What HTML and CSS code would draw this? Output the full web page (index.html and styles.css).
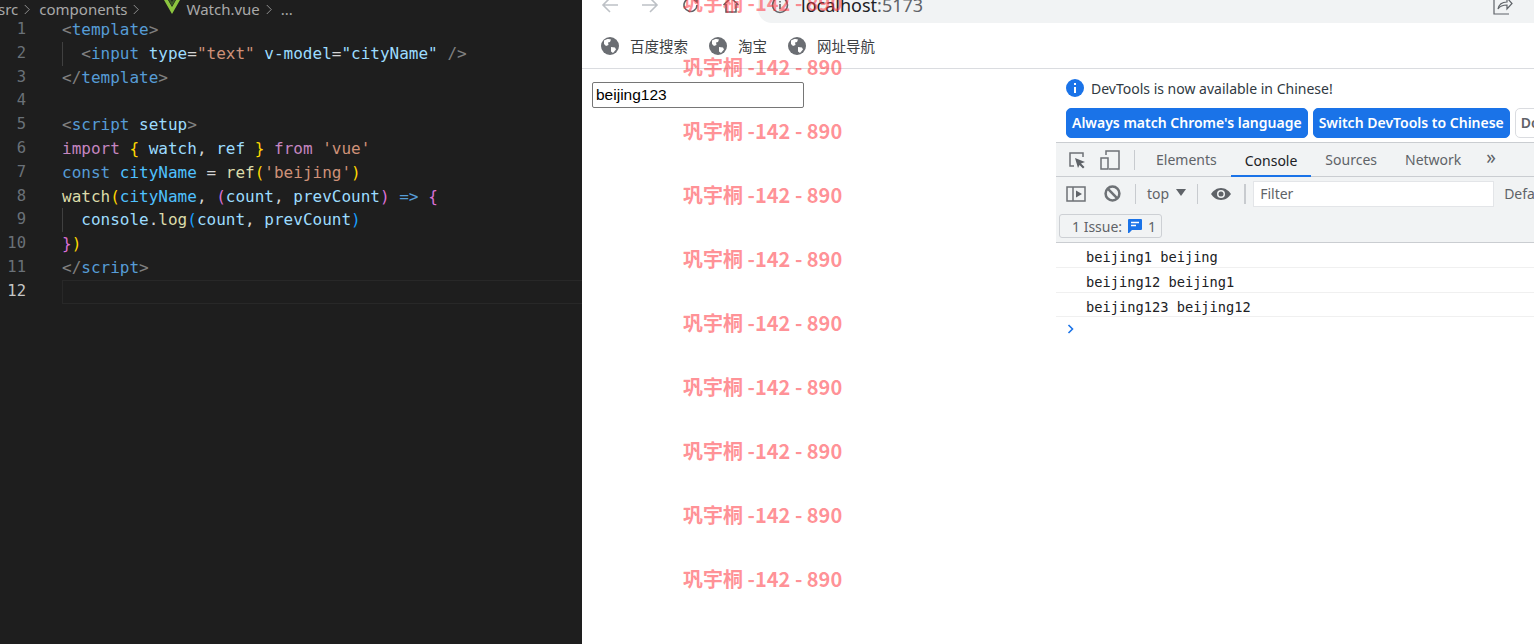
FILE: index.html
```html
<!DOCTYPE html>
<html lang="zh">
<head>
<meta charset="utf-8">
<title>Watch.vue</title>
<link rel="stylesheet" href="styles.css">
</head>
<body>
<div class="screen">
  <section class="editor">
    <nav class="crumbs">
      <span class="crumb-src">src</span>
      <svg class="chev" viewBox="0 0 8 14"><path d="M1 1l6 6-6 6"/></svg>
      <span>components</span>
      <svg class="chev" viewBox="0 0 8 14"><path d="M1 1l6 6-6 6"/></svg>
      <svg class="vue" viewBox="0 0 16 14"><path class="vue-o" d="M0 0h4l4 7 4-7h4L8 14z"/><path class="vue-i" d="M4.6 0H7l1 2 1-2h2.400L8 6z"/></svg>
      <span>Watch.vue</span>
      <svg class="chev" viewBox="0 0 8 14"><path d="M1 1l6 6-6 6"/></svg>
      <span>...</span>
    </nav>
    <div class="code">
      <div class="ln"><span class="no">1</span><code><i class="br">&lt;</i><i class="kw">template</i><i class="br">&gt;</i></code></div>
      <div class="ln guide"><span class="no">2</span><code>  <i class="br">&lt;</i><i class="kw">input</i> <i class="at">type</i><i class="pl">=</i><i class="st">"text"</i> <i class="at">v-model</i><i class="pl">=</i><i class="at">"cityName"</i> <i class="br">/&gt;</i></code></div>
      <div class="ln"><span class="no">3</span><code><i class="br">&lt;/</i><i class="kw">template</i><i class="br">&gt;</i></code></div>
      <div class="ln"><span class="no">4</span><code> </code></div>
      <div class="ln"><span class="no">5</span><code><i class="br">&lt;</i><i class="kw">script</i> <i class="at">setup</i><i class="br">&gt;</i></code></div>
      <div class="ln"><span class="no">6</span><code><i class="pk">import</i> <i class="go">{</i> <i class="at">watch</i><i class="pl">,</i> <i class="at">ref</i> <i class="go">}</i> <i class="pk">from</i> <i class="st">'vue'</i></code></div>
      <div class="ln"><span class="no">7</span><code><i class="kw">const</i> <i class="cn">cityName</i> <i class="pl">=</i> <i class="fn">ref</i><i class="go">(</i><i class="st">'beijing'</i><i class="go">)</i></code></div>
      <div class="ln"><span class="no">8</span><code><i class="fn">watch</i><i class="go">(</i><i class="cn">cityName</i><i class="pl">,</i> <i class="pu">(</i><i class="at">count</i><i class="pl">,</i> <i class="at">prevCount</i><i class="pu">)</i> <i class="kw">=&gt;</i> <i class="pu">{</i></code></div>
      <div class="ln guide"><span class="no">9</span><code>  <i class="at">console</i><i class="pl">.</i><i class="fn">log</i><i class="bl">(</i><i class="at">count</i><i class="pl">,</i> <i class="at">prevCount</i><i class="bl">)</i></code></div>
      <div class="ln"><span class="no">10</span><code><i class="pu">}</i><i class="go">)</i></code></div>
      <div class="ln"><span class="no">11</span><code><i class="br">&lt;/</i><i class="kw">script</i><i class="br">&gt;</i></code></div>
      <div class="ln current"><span class="no">12</span><code> </code></div>
    </div>
  </section>

  <section class="browser">
    <header class="toolbar">
      <svg class="tb back" viewBox="0 0 18 18"><path d="M17 9H2M9 2L2 9l7 7"/></svg>
      <svg class="tb fwd" viewBox="0 0 18 18"><path d="M1 9h15M9 2l7 7-7 7"/></svg>
      <svg class="tb reload" viewBox="0 0 18 18"><path d="M15 9a6.500 6.500 0 1 1-2-4.700L15 6V2"/></svg>
      <svg class="tb home" viewBox="0 0 18 18"><path d="M1.500 9L9 2l7.500 7M4 8v8h10V8"/></svg>
      <div class="url">
        <svg class="tb url-i" viewBox="0 0 18 18"><circle cx="9" cy="9" r="7.500"/><path d="M9 8v5M9 5v1.500"/></svg>
        <span class="host">localhost<span class="port">:5173</span></span>
        <svg class="tb share" viewBox="0 0 20 20"><path d="M1 5v14h15M5 14c1-5 4-7 9-7V3l5 5.500L14 14v-4c-4 0-7 1-9 4z"/></svg>
      </div>
    </header>
    <div class="bookmarks">
      <a class="bm"><svg class="globe" viewBox="0 0 18 18"><circle cx="9" cy="9" r="9"/><path class="land" d="M3 3.500c2-1.500 5-2 7-1l-1 2.500-2 .5.500 2.500-2.500 1L3 7zM10 10l4 .5 1 2-3 3.500-2-1.500z"/></svg>百度搜索</a>
      <a class="bm"><svg class="globe" viewBox="0 0 18 18"><circle cx="9" cy="9" r="9"/><path class="land" d="M3 3.500c2-1.500 5-2 7-1l-1 2.500-2 .5.500 2.500-2.500 1L3 7zM10 10l4 .5 1 2-3 3.500-2-1.500z"/></svg>淘宝</a>
      <a class="bm"><svg class="globe" viewBox="0 0 18 18"><circle cx="9" cy="9" r="9"/><path class="land" d="M3 3.500c2-1.500 5-2 7-1l-1 2.500-2 .5.500 2.500-2.500 1L3 7zM10 10l4 .5 1 2-3 3.500-2-1.500z"/></svg>网址导航</a>
    </div>
    <div class="viewport">
      <main class="page">
        <input class="city" type="text" value="beijing123">
      </main>
      <aside class="devtools">
        <div class="infobar">
          <div class="info-msg">
            <svg class="info-i" viewBox="0 0 18 18"><circle cx="9" cy="9" r="9"/><path d="M8 8h2v6H8zM8 4h2v2H8z"/></svg>
            <span>DevTools is now available in Chinese!</span>
          </div>
          <div class="info-btns">
            <button class="btn primary">Always match Chrome's language</button>
            <button class="btn primary">Switch DevTools to Chinese</button>
            <button class="btn plain">Don't show again</button>
          </div>
        </div>
        <div class="tabs">
          <svg class="dt inspect" viewBox="0 0 18 18"><path class="ln-i" d="M6 15H2V2h13v4"/><path class="fill" d="M7 7l10 4-4 1.500 3.500 3.500-1.500 1.500-3.500-3.500L10 17z"/></svg>
          <svg class="dt device" viewBox="0 0 20 20"><path class="ln-i" d="M6 5V1h13v18H9M1 8h7v11H1z"/></svg>
          <span class="sep tab-sep"></span>
          <span class="tab">Elements</span>
          <span class="tab active">Console</span>
          <span class="tab">Sources</span>
          <span class="tab">Network</span>
          <span class="more">»</span>
        </div>
        <div class="filters">
          <svg class="dt sidebar" viewBox="0 0 20 16"><path class="ln-i" d="M1 1h18v14H1zM7 1v14"/><path class="fill" d="M10 4.500l6 3.500-6 3.500z"/></svg>
          <svg class="dt clear" viewBox="0 0 16 16"><circle class="ln-b" cx="8" cy="8" r="6.500"/><path class="ln-b" d="M3.500 3.500l9 9"/></svg>
          <span class="sep"></span>
          <span class="ctx">top</span>
          <span class="tri"></span>
          <span class="sep"></span>
          <svg class="dt eye" viewBox="0 0 20 12"><path class="fill" d="M10 0c4.500 0 8 3 10 6-2 3-5.500 6-10 6S2 9 0 6c2-3 5.500-6 10-6z"/><circle class="eye-w" cx="10" cy="6" r="4"/><circle class="fill" cx="10" cy="6" r="2.500"/></svg>
          <span class="sep wide"></span>
          <input class="filter" type="text" placeholder="Filter">
          <span class="levels">Default levels</span>
        </div>
        <div class="issues">
          <span class="issue-btn">1 Issue:
            <svg class="msg" viewBox="0 0 14 14"><path d="M1 0h12a1 1 0 0 1 1 1v9a1 1 0 0 1-1 1H4l-3 3H0V1a1 1 0 0 1 1-1z"/><path class="msg-l" d="M3 3.500h8M3 6.500h5"/></svg>
            1</span>
        </div>
        <div class="logs">
          <div class="log">beijing1 beijing</div>
          <div class="log">beijing12 beijing1</div>
          <div class="log">beijing123 beijing12</div>
          <svg class="prompt" viewBox="0 0 8 10"><path d="M1.500 1l4 4-4 4"/></svg>
        </div>
      </aside>
    </div>
  </section>

  <div class="watermarks">
    <span>巩宇桐 -142 - 890</span><span>巩宇桐 -142 - 890</span><span>巩宇桐 -142 - 890</span>
    <span>巩宇桐 -142 - 890</span><span>巩宇桐 -142 - 890</span><span>巩宇桐 -142 - 890</span>
    <span>巩宇桐 -142 - 890</span><span>巩宇桐 -142 - 890</span><span>巩宇桐 -142 - 890</span>
    <span>巩宇桐 -142 - 890</span>
  </div>
</div>
</body>
</html>
```

FILE: styles.css
```css
* { box-sizing: border-box; }
html, body { margin: 0; padding: 0; height: 100%; overflow: hidden; background: #fff; }
.screen { position: relative; display: flex; width: 1534px; height: 644px; overflow: hidden; }

/* editor */
.editor { flex: 0 0 582px; background: #1e1e1e; color: #a9a9a9; overflow: hidden; }
.crumbs { display: flex; align-items: center; height: 20px; margin-left: -2px; margin-top: -2px; padding-top: 2px; font: 15px/18px "Noto Sans", sans-serif; white-space: nowrap; }
.chev { width: 6px; height: 11px; margin: 0 9px 0 6px; fill: none; stroke: #a9a9a9; stroke-width: 1.1; }
.crumb-src + .chev { margin: 0 9px 0 6px; }
.vue { width: 16px; height: 14px; margin: 0 6px 0 16px; align-self: flex-start; }
.vue-o { fill: #8cc63f; }
.vue-i { fill: #3d5c27; }
.code { font: 16px/23.8px "DejaVu Sans Mono", monospace; }
.ln { display: flex; height: 23.8px; white-space: pre; }
.ln code { font: inherit; position: relative; flex: 1; margin-left: 62px; }
.no { position: absolute; width: 26px; text-align: right; color: #6a7178; font: 15.5px/23.8px "DejaVu Sans Mono", monospace; }
.ln i { font-style: normal; }
.guide code::before { content: ""; position: absolute; left: 0; top: 0; bottom: 0; width: 1px; background: #404040; }
.current .no { color: #c6c6c6; }
.current code { border: 1px solid #282828; border-right: 0; }
.br { color: #808080; }
.kw { color: #569cd6; }
.at { color: #9cdcfe; }
.st { color: #ce9178; }
.pl { color: #d4d4d4; }
.pk { color: #c586c0; }
.go { color: #ffd700; }
.pu { color: #da70d6; }
.bl { color: #179fff; }
.cn { color: #4fc1ff; }
.fn { color: #dcdcaa; }

/* browser chrome */
.browser { flex: 1; min-width: 0; display: flex; flex-direction: column; background: #fff; }
.toolbar { display: flex; align-items: center; height: 36px; margin-top: -13px; padding-left: 19px; flex: none; }
.tb { fill: none; stroke: #5f6368; stroke-width: 1.6; flex: none; }
.back, .fwd { width: 18px; height: 18px; stroke: #bdc1c6; }
.fwd { margin-left: 22px; }
.reload { width: 18px; height: 18px; margin-left: 23px; }
.home { width: 18px; height: 18px; margin-left: 22px; }
.url { display: flex; align-items: center; flex: 1; height: 36px; margin-left: 18px; padding-left: 13px; background: #f1f3f4; border-radius: 0 0 0 14px; }
.url-i { width: 18px; height: 18px; }
.host { margin-left: 12px; font: 18px "Noto Sans", sans-serif; color: #202124; }
.port { color: #5f6368; }
.share { width: 20px; height: 20px; margin-left: auto; margin-right: 21px; stroke-width: 1.2; }
.bookmarks { display: flex; align-items: center; flex: none; height: 46px; padding-left: 19px; border-bottom: 1px solid #dadce0; }
.bm { display: flex; align-items: center; margin-right: 21px; font: 14.500px/20px "Noto Sans CJK SC", sans-serif; color: #3c4043; }
.globe { width: 18px; height: 18px; margin-right: 11px; fill: #6b6e73; }
.land { fill: #fff; }
.viewport { display: flex; flex: 1; min-height: 0; }
.page { flex: 0 0 474px; padding: 13px 10px; }
.city { display: block; width: 212px; height: 26px; padding: 1px 3px; border: 1px solid #767676; border-radius: 2px; font: 15.500px "Liberation Sans", sans-serif; color: #000; outline: 0; }

/* devtools */
.devtools { flex: 1; min-width: 0; overflow: hidden; font-family: "Noto Sans", sans-serif; color: #202124; }
.infobar { height: 73px; padding: 9px 0 0 10px; }
.info-msg { display: flex; align-items: center; height: 20px; font-size: 14px; color: #303942; white-space: nowrap; }
.info-i { width: 18px; height: 18px; margin-right: 7px; fill: #1a73e8; }
.info-i path { fill: #fff; }
.info-btns { display: flex; gap: 5px; margin-top: 10px; }
.btn { flex: none; height: 30px; padding: 0 5px; border-radius: 5px; font: 600 14px/28px "Noto Sans", sans-serif; white-space: nowrap; border: 1px solid #1a73e8; }
.primary { background: #1a73e8; color: #fff; }
.plain { background: #fff; color: #5f6368; border-color: #dadce0; }
.tabs { display: flex; align-items: stretch; height: 35px; padding-left: 12px; background: #f1f3f4; border-top: 1px solid #cacdd1; border-bottom: 1px solid #cacdd1; position: relative; font-size: 14px; color: #5f6368; }
.dt { flex: none; align-self: center; }
.fill { fill: #5f6368; }
.ln-i, .ln-b { fill: none; stroke: #6e7276; stroke-width: 1.5; }
.ln-b { stroke-width: 2.4; }
.inspect { width: 18px; height: 18px; }
.device { width: 20px; height: 20px; margin-left: 14px; }
.sep { flex: none; align-self: center; width: 1px; height: 20px; background: #c8cbcf; }
.tab-sep { margin: 0 7px 0 14px; }
.tab { display: flex; align-items: center; padding: 0 14px; white-space: nowrap; }
.tab.active { color: #202124; box-shadow: inset 0 -2px 0 #1a73e8; margin-bottom: -1px; }
.more { display: flex; align-items: center; margin-left: 11px; font-size: 19px; line-height: 1; padding-bottom: 4px; }
.filters { display: flex; align-items: center; height: 33px; padding-left: 10px; background: #f1f3f4; font-size: 14px; color: #5f6368; white-space: nowrap; }
.sidebar { width: 20px; height: 16px; }
.clear { width: 17px; height: 17px; margin: 0 14px 0 18px; }
.ctx { margin-left: 11px; }
.tri { width: 0; height: 0; margin: 0 11px 2px 7px; border: 5px solid transparent; border-top: 7px solid #5f6368; border-bottom: 0; }
.eye { width: 20px; height: 12px; margin: 0 13px; }
.eye-w { fill: #f1f3f4; }
.wide { width: 2px; }
.filter { flex: none; width: 241px; height: 26px; margin: 0 10px 0 7px; padding: 0 6px; border: 1px solid #e3e5e8; background: #fff; font: 14px "Noto Sans", sans-serif; outline: 0; }
.filter::placeholder { color: #5f6368; opacity: 1; }
.issues { display: flex; align-items: center; height: 33px; padding-left: 3px; background: #f1f3f4; border-bottom: 1px solid #cacdd1; font-size: 14px; color: #5f6368; }
.issue-btn { display: flex; align-items: center; gap: 6px; height: 24px; width: 103px; padding-left: 12px; border: 1px solid #cdd0d4; border-radius: 3px; white-space: nowrap; }
.msg { width: 14px; height: 14px; fill: #1a73e8; flex: none; }
.msg-l { fill: none; stroke: #fff; stroke-width: 1.4; }
.log { height: 25px; padding-left: 30px; border-bottom: 1px solid #f0f0f0; font: 13.700px/28px "DejaVu Sans Mono", monospace; color: #202124; white-space: pre; }
.log:last-of-type { height: 24px; }
.prompt { display: block; width: 8px; height: 10px; margin: 7px 0 0 11px; fill: none; stroke: #1a73e8; stroke-width: 1.6; }

/* watermark overlay */
.watermarks { position: absolute; left: 683px; top: -29px; display: flex; flex-direction: column; pointer-events: none; }
.watermarks span { height: 64px; font: 700 20px/64px "Noto Sans CJK SC", sans-serif; color: rgba(255, 50, 60, .55); white-space: pre; }
```
